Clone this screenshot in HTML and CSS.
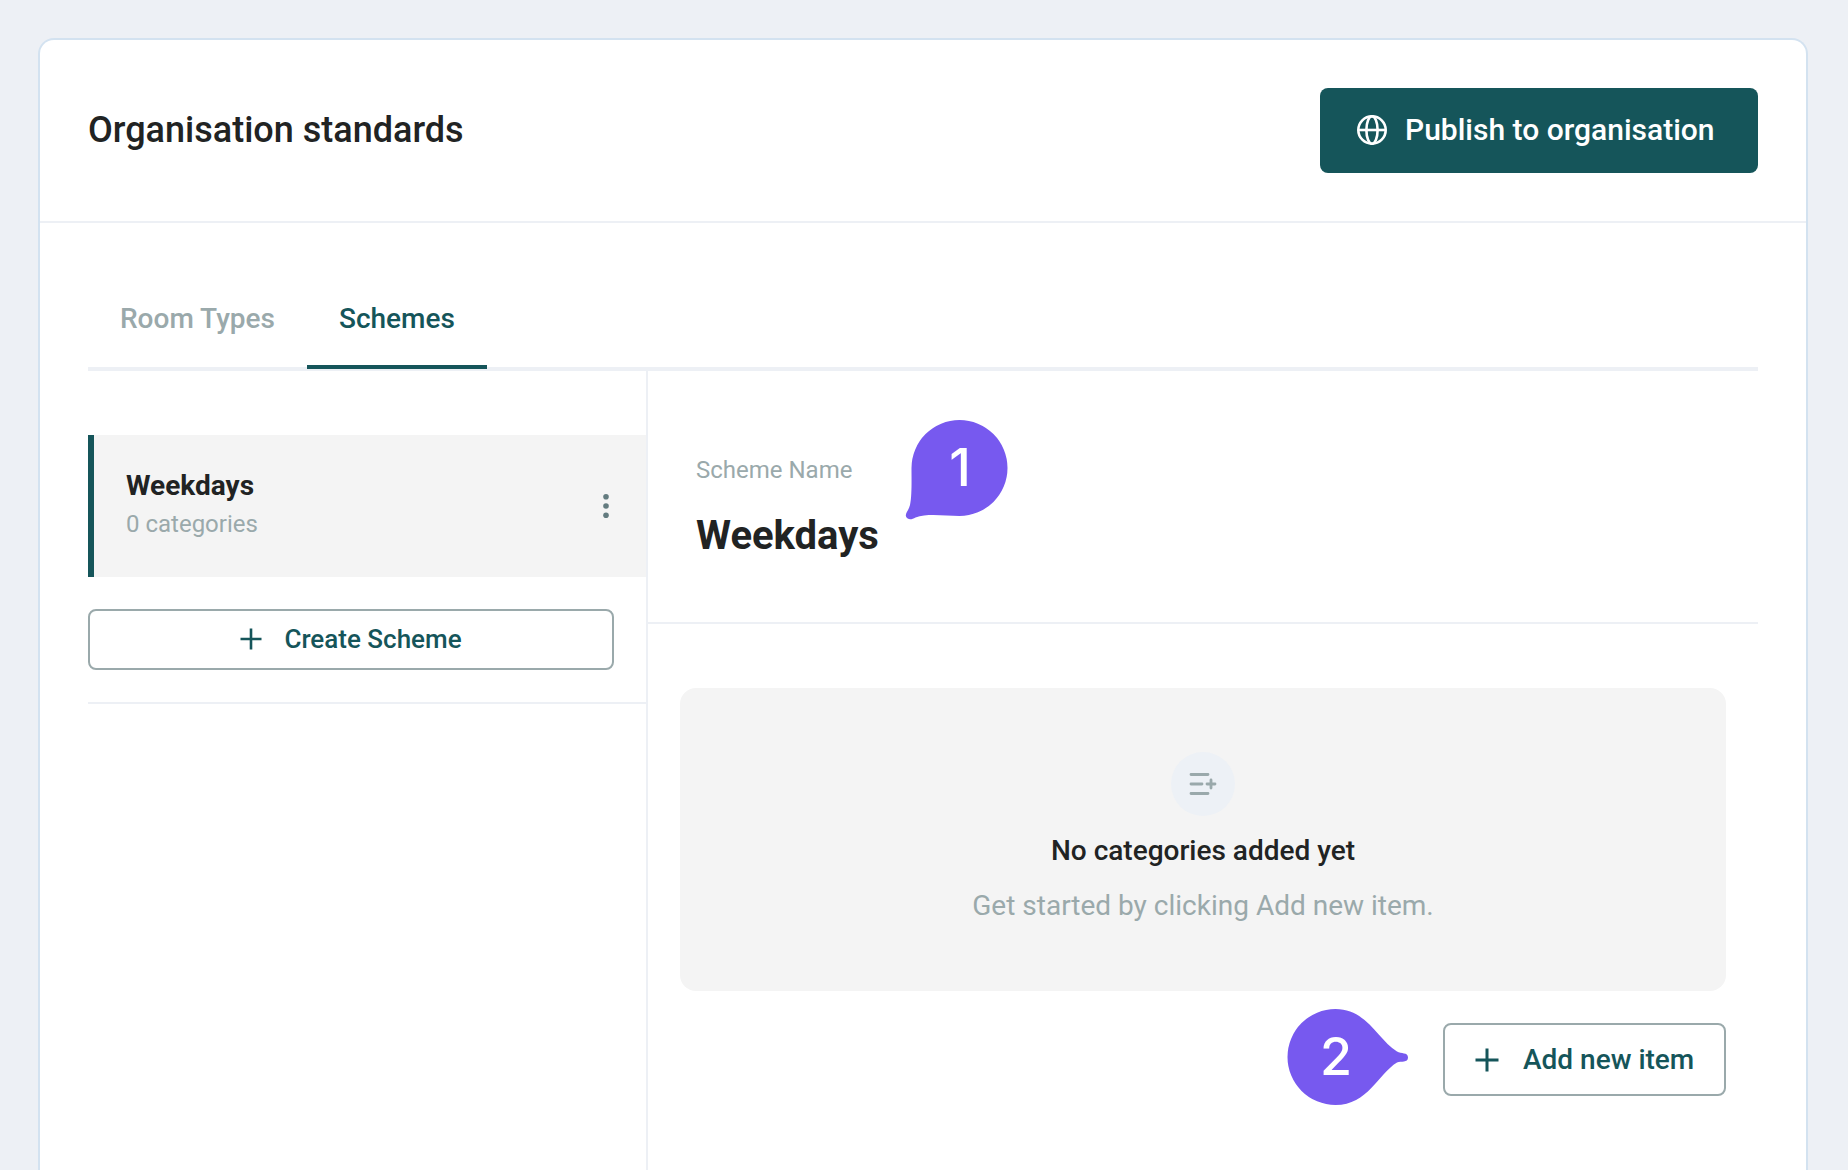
FILE: index.html
```html
<!DOCTYPE html>
<html lang="en">
<head>
<meta charset="utf-8">
<title>Organisation standards</title>
<link rel="stylesheet" href="styles.css">
</head>
<body>
<main class="card">
  <header class="card-header">
    <h1 class="title">Organisation standards</h1>
    <button class="publish">
      <svg class="globe" viewBox="0 0 32 32"><circle cx="16" cy="16" r="13.7"/><ellipse cx="16" cy="16" rx="5.6" ry="13.7"/><path d="M2.3 16h27.4"/></svg>
      <span>Publish to organisation</span>
    </button>
  </header>
  <div class="card-body">
    <nav class="tabs">
      <a class="tab">Room Types</a>
      <a class="tab tab-active">Schemes</a>
    </nav>
    <div class="columns">
      <aside class="sidebar">
        <div class="scheme">
          <div class="scheme-text">
            <div class="scheme-name">Weekdays</div>
            <div class="scheme-count">0 categories</div>
          </div>
          <svg class="dots" viewBox="0 0 8 28"><circle cx="4" cy="4.7" r="2.8"/><circle cx="4" cy="14" r="2.8"/><circle cx="4" cy="23.3" r="2.8"/></svg>
        </div>
        <div class="create-row">
          <button class="outline create">
            <svg class="plus" viewBox="0 0 22 22"><path d="M11 .5v21M.5 11h21"/></svg>
            <span>Create Scheme</span>
          </button>
        </div>
      </aside>
      <section class="detail">
        <div class="detail-header">
          <div class="label">Scheme Name</div>
          <h2 class="detail-name">Weekdays</h2>
        </div>
        <div class="detail-body">
          <div class="empty">
            <div class="empty-icon">
              <svg class="list-plus" viewBox="0 0 28 24"><path d="M2 2.5h17M2 12h11M2 21.500h17M18 12h8M22 8v8"/></svg>
            </div>
            <div class="empty-title">No categories added yet</div>
            <div class="empty-hint">Get started by clicking Add new item.</div>
          </div>
          <button class="outline add">
            <svg class="plus plus-large" viewBox="0 0 24 24"><path d="M12 .5v23M.5 12h23"/></svg>
            <span>Add new item</span>
          </button>
        </div>
      </section>
    </div>
  </div>
</main>
<div class="marker marker-one">
  <svg class="marker-shape" viewBox="0 0 104 102"><path d="M7.500 49A48 48 0 1 1 55.500 97C41 97 24 94 11.500 98.500C7.500 101 3.500 101 2 97.500C1 94 4.500 92 6 86C8 77 7.500 60 7.500 49Z"/></svg>
  <span class="marker-number number-one">1</span>
</div>
<div class="marker marker-two">
  <svg class="marker-shape" viewBox="0 0 122 98"><path d="M48.500 1A48 48 0 0 0 48.500 97C81 97 91 66 110 54.500C114 53 121 55 121 49.500C121 44 114 46 110 43.500C91 32 80 1 48.500 1Z"/></svg>
  <span class="marker-number number-two">2</span>
</div>
</body>
</html>
```

FILE: styles.css
```css
* { box-sizing: border-box; }
body {
  margin: 0;
  height: 1170px;
  overflow: hidden;
  position: relative;
  padding: 38px 40px 0 38px;
  background: #edf0f5;
  font-family: Roboto, sans-serif;
  color: #212323;
}
h1, h2 { margin: 0; }
button { font-family: inherit; margin: 0; padding: 0; font-weight: 500; }
svg { display: block; flex: none; fill: none; }
.card {
  height: 1132px;
  display: flex;
  flex-direction: column;
  background: #fff;
  border: 2px solid #d3e2f0;
  border-bottom: 0;
  border-radius: 16px 16px 0 0;
}
.card-header {
  flex: none;
  height: 183px;
  padding: 0 48px;
  display: flex;
  align-items: center;
  justify-content: space-between;
  border-bottom: 2px solid #edf0f5;
}
.title { padding-bottom: 1px; font-size: 36px; line-height: 44px; font-weight: 500; }
.publish {
  width: 438px;
  height: 85px;
  padding: 0 0 2px 36px;
  display: flex;
  align-items: center;
  gap: 17px;
  border: 0;
  border-radius: 8px;
  background: #15555a;
  color: #fff;
  font-size: 30px;
}
.globe { width: 32px; height: 32px; stroke: #fff; stroke-width: 2.6; }
.card-body {
  flex: 1;
  padding: 0 48px;
  display: flex;
  flex-direction: column;
}
.tabs {
  flex: none;
  height: 148px;
  padding-top: 62px;
  display: flex;
  border-bottom: 4px solid #edf0f5;
}
.tab {
  height: 84px;
  padding: 16px 32px 0;
  font-size: 28px;
  line-height: 36px;
  font-weight: 500;
  color: #9aa9ab;
}
.tab-active { border-bottom: 4px solid #15555a; color: #15555a; }
.columns { flex: 1; display: flex; }
.sidebar {
  width: 560px;
  padding-top: 64px;
  border-right: 2px solid #edf0f5;
}
.scheme {
  height: 142px;
  padding: 0 36px 0 32px;
  display: flex;
  align-items: center;
  justify-content: space-between;
  border-left: 6px solid #15555a;
  background: #f4f4f4;
}
.scheme-text { padding-bottom: 2px; }
.scheme-name { font-size: 28px; line-height: 38px; font-weight: 700; }
.scheme-count { font-size: 24px; line-height: 38px; color: #9aa9ab; }
.dots { width: 8px; height: 28px; fill: #637b7f; }
.create-row { padding: 32px 32px 32px 0; border-bottom: 2px solid #edf0f5; }
.outline {
  display: flex;
  align-items: center;
  border: 2px solid #9aa9ab;
  border-radius: 8px;
  background: #fff;
  color: #15555a;
}
.create {
  width: 526px;
  height: 61px;
  padding-bottom: 1px;
  justify-content: center;
  gap: 22px;
  font-size: 26px;
}
.plus { width: 22px; height: 22px; stroke: #15555a; stroke-width: 2.6; }
.plus-large { width: 24px; height: 24px; stroke-width: 3; }
.detail { flex: 1; }
.detail-header {
  height: 253px;
  padding: 82px 48px 0;
  border-bottom: 2px solid #edf0f5;
}
.label { font-size: 24px; line-height: 34px; color: #9aa9ab; }
.detail-name { margin-top: 24px; font-size: 40px; line-height: 50px; font-weight: 700; }
.detail-body {
  padding: 64px 32px 0;
  display: flex;
  flex-direction: column;
  align-items: flex-end;
  gap: 32px;
}
.empty {
  width: 100%;
  height: 303px;
  padding-top: 64px;
  display: flex;
  flex-direction: column;
  align-items: center;
  border-radius: 16px;
  background: #f4f4f4;
}
.empty-icon {
  width: 64px;
  height: 64px;
  display: flex;
  align-items: center;
  justify-content: center;
  border-radius: 50%;
  background: #edf1f6;
}
.list-plus { width: 28px; height: 24px; stroke: #9aa9ab; stroke-width: 2.8; stroke-linecap: round; }
.empty-title { margin-top: 17px; font-size: 28px; line-height: 36px; font-weight: 500; }
.empty-hint { margin-top: 19px; font-size: 28px; line-height: 36px; color: #9aa9ab; }
.add {
  width: 283px;
  height: 73px;
  padding-left: 30px;
  gap: 24px;
  font-size: 28px;
}
.marker { position: absolute; color: #fff; }
.marker-one { left: 904px; top: 419px; width: 104px; height: 102px; }
.marker-two { left: 1287px; top: 1008px; width: 122px; height: 98px; }
.marker-shape { width: 100%; height: 100%; fill: #7759ef; }
.marker-number {
  position: absolute;
  top: 19px;
  width: 96px;
  text-align: center;
  font: 500 52px/60px Inter, sans-serif;
}
.number-one { left: 8px; }
.number-two { left: 1px; }
```
